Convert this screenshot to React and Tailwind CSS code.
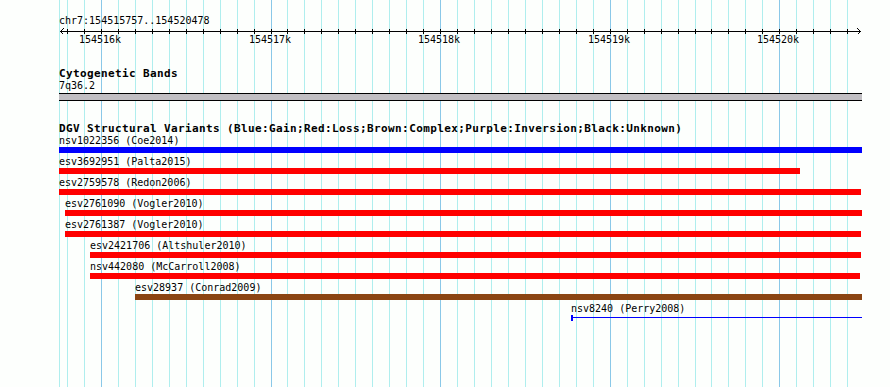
import React from "react";

const GRID = Array.from({ length: 47 }, (_, n) => ({
  x: Math.floor(67.5 + n * 16.96),
  major: (n - 2) % 10 === 0,
}));

const TICKS = [
  { x: 101, label: "154516k" },
  { x: 271, label: "154517k" },
  { x: 440, label: "154518k" },
  { x: 610, label: "154519k" },
  { x: 779, label: "154520k" },
];

const ROWS = [
  { label: "nsv1022356 (Coe2014)", start: 0, width: 803, color: "bg-[#0000ff]" },
  { label: "esv3692951 (Palta2015)", start: 0, width: 741, color: "bg-[#ff0000]" },
  { label: "esv2759578 (Redon2006)", start: 0, width: 802, color: "bg-[#ff0000]" },
  { label: "esv2761090 (Vogler2010)", start: 6, width: 797, color: "bg-[#ff0000]" },
  { label: "esv2761387 (Vogler2010)", start: 6, width: 796, color: "bg-[#ff0000]" },
  { label: "esv2421706 (Altshuler2010)", start: 31, width: 771, color: "bg-[#ff0000]" },
  { label: "nsv442080 (McCarroll2008)", start: 31, width: 770, color: "bg-[#ff0000]" },
  { label: "esv28937 (Conrad2009)", start: 76, width: 727, color: "bg-[#8b4513]" },
];

function GridLines() {
  return (
    <svg className="absolute inset-0" width="890" height="387" shapeRendering="crispEdges">
      <rect x="59" y="0" width="1" height="387" fill="#afeeee" />
      {GRID.map((g) => (
        <rect
          key={g.x}
          x={g.x}
          y="0"
          width="1"
          height="387"
          fill={g.major ? "#8ac8e8" : "#afeeee"}
        />
      ))}
    </svg>
  );
}

function Ruler() {
  return (
    <svg width="803" height="9" className="block" shapeRendering="crispEdges">
      <rect x="1" y="5" width="801" height="1" fill="#000" />
      {GRID.map((g) => (
        <rect key={g.x} x={g.x - 59} y="3" width="1" height="5" fill="#000" />
      ))}
      <polyline points="4.5,2.5 1.5,5.5 4.5,8.5" fill="none" stroke="#000" strokeWidth="1" />
      <polyline points="798.5,2.5 801.5,5.5 798.5,8.5" fill="none" stroke="#000" strokeWidth="1" />
    </svg>
  );
}

function TickLabels() {
  return (
    <div className="relative h-[10px]">
      {TICKS.map((t) => (
        <span
          key={t.label}
          className="absolute top-0 whitespace-nowrap"
          style={{ left: t.x - 59 - 22 }}
        >
          {t.label}
        </span>
      ))}
    </div>
  );
}

function Row({ label, start, width, color }) {
  return (
    <div className="h-[21px]">
      <div className="h-[10px] whitespace-nowrap" style={{ paddingLeft: start }}>
        {label}
      </div>
      <div className={`mt-px h-[6px] ${color}`} style={{ marginLeft: start, width }} />
    </div>
  );
}

function ThinRow() {
  const start = 512;
  return (
    <div className="h-[21px]">
      <div className="h-[10px] whitespace-nowrap" style={{ paddingLeft: start }}>
        nsv8240 (Perry2008)
      </div>
      <div className="mt-px flex h-[6px]" style={{ marginLeft: start, width: 291 }}>
        <div className="h-[6px] w-[2px] bg-[#0000ff]" />
        <div className="mt-[2px] h-px flex-1 bg-[#0000ff]" />
      </div>
    </div>
  );
}

export default function App() {
  return (
    <div className="relative h-[387px] w-[890px] overflow-hidden bg-[#fdfffd] font-['DejaVu_Sans_Mono','Liberation_Mono',monospace] text-[10px] leading-[10px] text-black">
      <GridLines />
      <div className="relative ml-[59px] w-[803px] pt-4">
        <div className="h-[10px] whitespace-nowrap">chr7:154515757..154520478</div>
        <Ruler />
        <TickLabels />
        <div className="mt-[23px] h-[11px] whitespace-nowrap text-[11px] font-bold leading-[11px] tracking-[0.38px]">
          Cytogenetic Bands
        </div>
        <div className="mt-[2px] h-[10px]">7q36.2</div>
        <div className="mt-[2px] h-[8px] border-y border-black bg-[#c1bfc3]" />
        <div className="mt-[22px] h-[11px] whitespace-nowrap text-[11px] font-bold leading-[11px] tracking-[0.38px]">
          DGV Structural Variants (Blue:Gain;Red:Loss;Brown:Complex;Purple:Inversion;Black:Unknown)
        </div>
        <div className="mt-[2px] flex flex-col">
          {ROWS.map((r) => (
            <Row key={r.label} {...r} />
          ))}
          <ThinRow />
        </div>
      </div>
    </div>
  );
}
